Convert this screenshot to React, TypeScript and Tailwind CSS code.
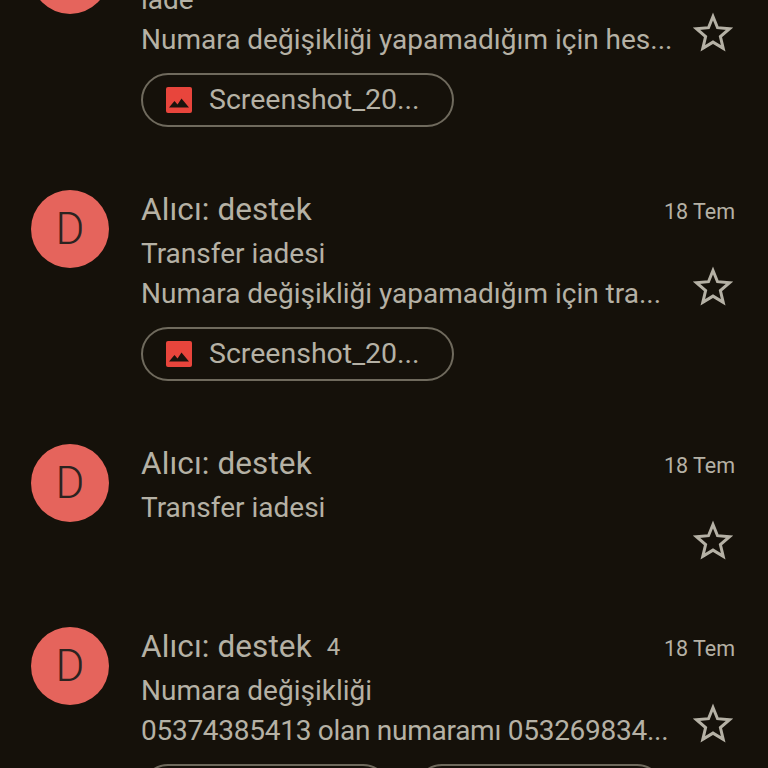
import React from "react";

const font = "font-['Roboto',sans-serif]";

function Star() {
  return (
    <svg width="40" height="40" viewBox="0 0 40 40" fill="none">
      <path
        d="M20 4.5l4.5 11.2 12 1-9.1 7.9 2.8 11.7L20 30.1 9.8 36.3l2.8-11.7-9.1-7.9 12-1z"
        stroke="#b5b1a5"
        strokeWidth="3"
        strokeLinejoin="miter"
      />
    </svg>
  );
}

function Chip({ className }: { className: string }) {
  return (
    <div className={`flex items-center h-[54px] rounded-full border-2 border-[#6f6a5d] pl-[22px] shrink-0 ${className}`}>
      <svg width="28" height="28" viewBox="0 0 28 28" className="shrink-0">
        <rect x="1" y="1" width="26" height="26" rx="2" fill="#e8453c" />
        <path d="M4 21.5l5.5-6.5 3 3.5 4-6 7.5 9z" fill="#1a130d" />
      </svg>
      <span className="ml-[16px] text-[28.5px] leading-none text-[#b5b1a5] whitespace-nowrap">Screenshot_20...</span>
    </div>
  );
}

interface RowProps {
  count?: string;
  subject: string;
  snippet?: string;
  snippetClass?: string;
  chips?: string[];
  className?: string;
}

function Row({ count, subject, snippet, snippetClass = "", chips = [], className = "" }: RowProps) {
  return (
    <div className={`flex pl-[31px] pr-[33px] pb-[60px] ${className}`}>
      <div className="w-[78px] h-[78px] rounded-full bg-[#e5645c] flex items-center justify-center text-[44px] text-[#2b2320] shrink-0 font-light mt-[3px]">
        D
      </div>
      <div className="ml-[32px] flex-1 min-w-0">
        <div className="flex items-center justify-between h-[46px]">
          <div className="flex items-center">
            <span className="text-[31.5px] tracking-[0.1px] text-[#b5b1a5]">Alıcı: destek</span>
            {count && <span className="ml-[15px] text-[24px] text-[#b5b1a5]">{count}</span>}
          </div>
          <span className="text-[21.5px] pt-[5px] text-[#b5b1a5]">18 Tem</span>
        </div>
        <div className="flex mt-[1px]">
          <div className="flex-1 min-w-0 text-[28px] leading-[40px] text-[#b5b1a5]">
            <div className="whitespace-nowrap">{subject}</div>
            {snippet && <div className={`whitespace-nowrap ${snippetClass}`}>{snippet}</div>}
          </div>
          <div className="w-[40px] h-[40px] mt-[32px] mb-[4px] mr-[2px] shrink-0">
            <Star />
          </div>
        </div>
        {chips.length > 0 && (
          <div className="flex gap-[25px] mt-[13px]">
            {chips.map((w, i) => (
              <Chip key={i} className={w} />
            ))}
          </div>
        )}
      </div>
    </div>
  );
}

export default function App() {
  return (
    <div className={`w-[768px] h-[768px] overflow-hidden bg-[#15110a] ${font}`}>
      <Row
        className="-mt-[67px]"
        subject="iade"
        snippet="Numara değişikliği yapamadığım için hes..."
        chips={["w-[313px]"]}
      />
      <Row subject="Transfer iadesi" snippet="Numara değişikliği yapamadığım için tra..." chips={["w-[313px]"]} />
      <Row subject="Transfer iadesi" />
      <Row
        count="4"
        subject="Numara değişikliği"
        snippet="05374385413 olan numaramı 053269834..."
        snippetClass="tracking-[-0.27px]"
        chips={["w-[249px]", "w-[249px]"]}
      />
    </div>
  );
}
